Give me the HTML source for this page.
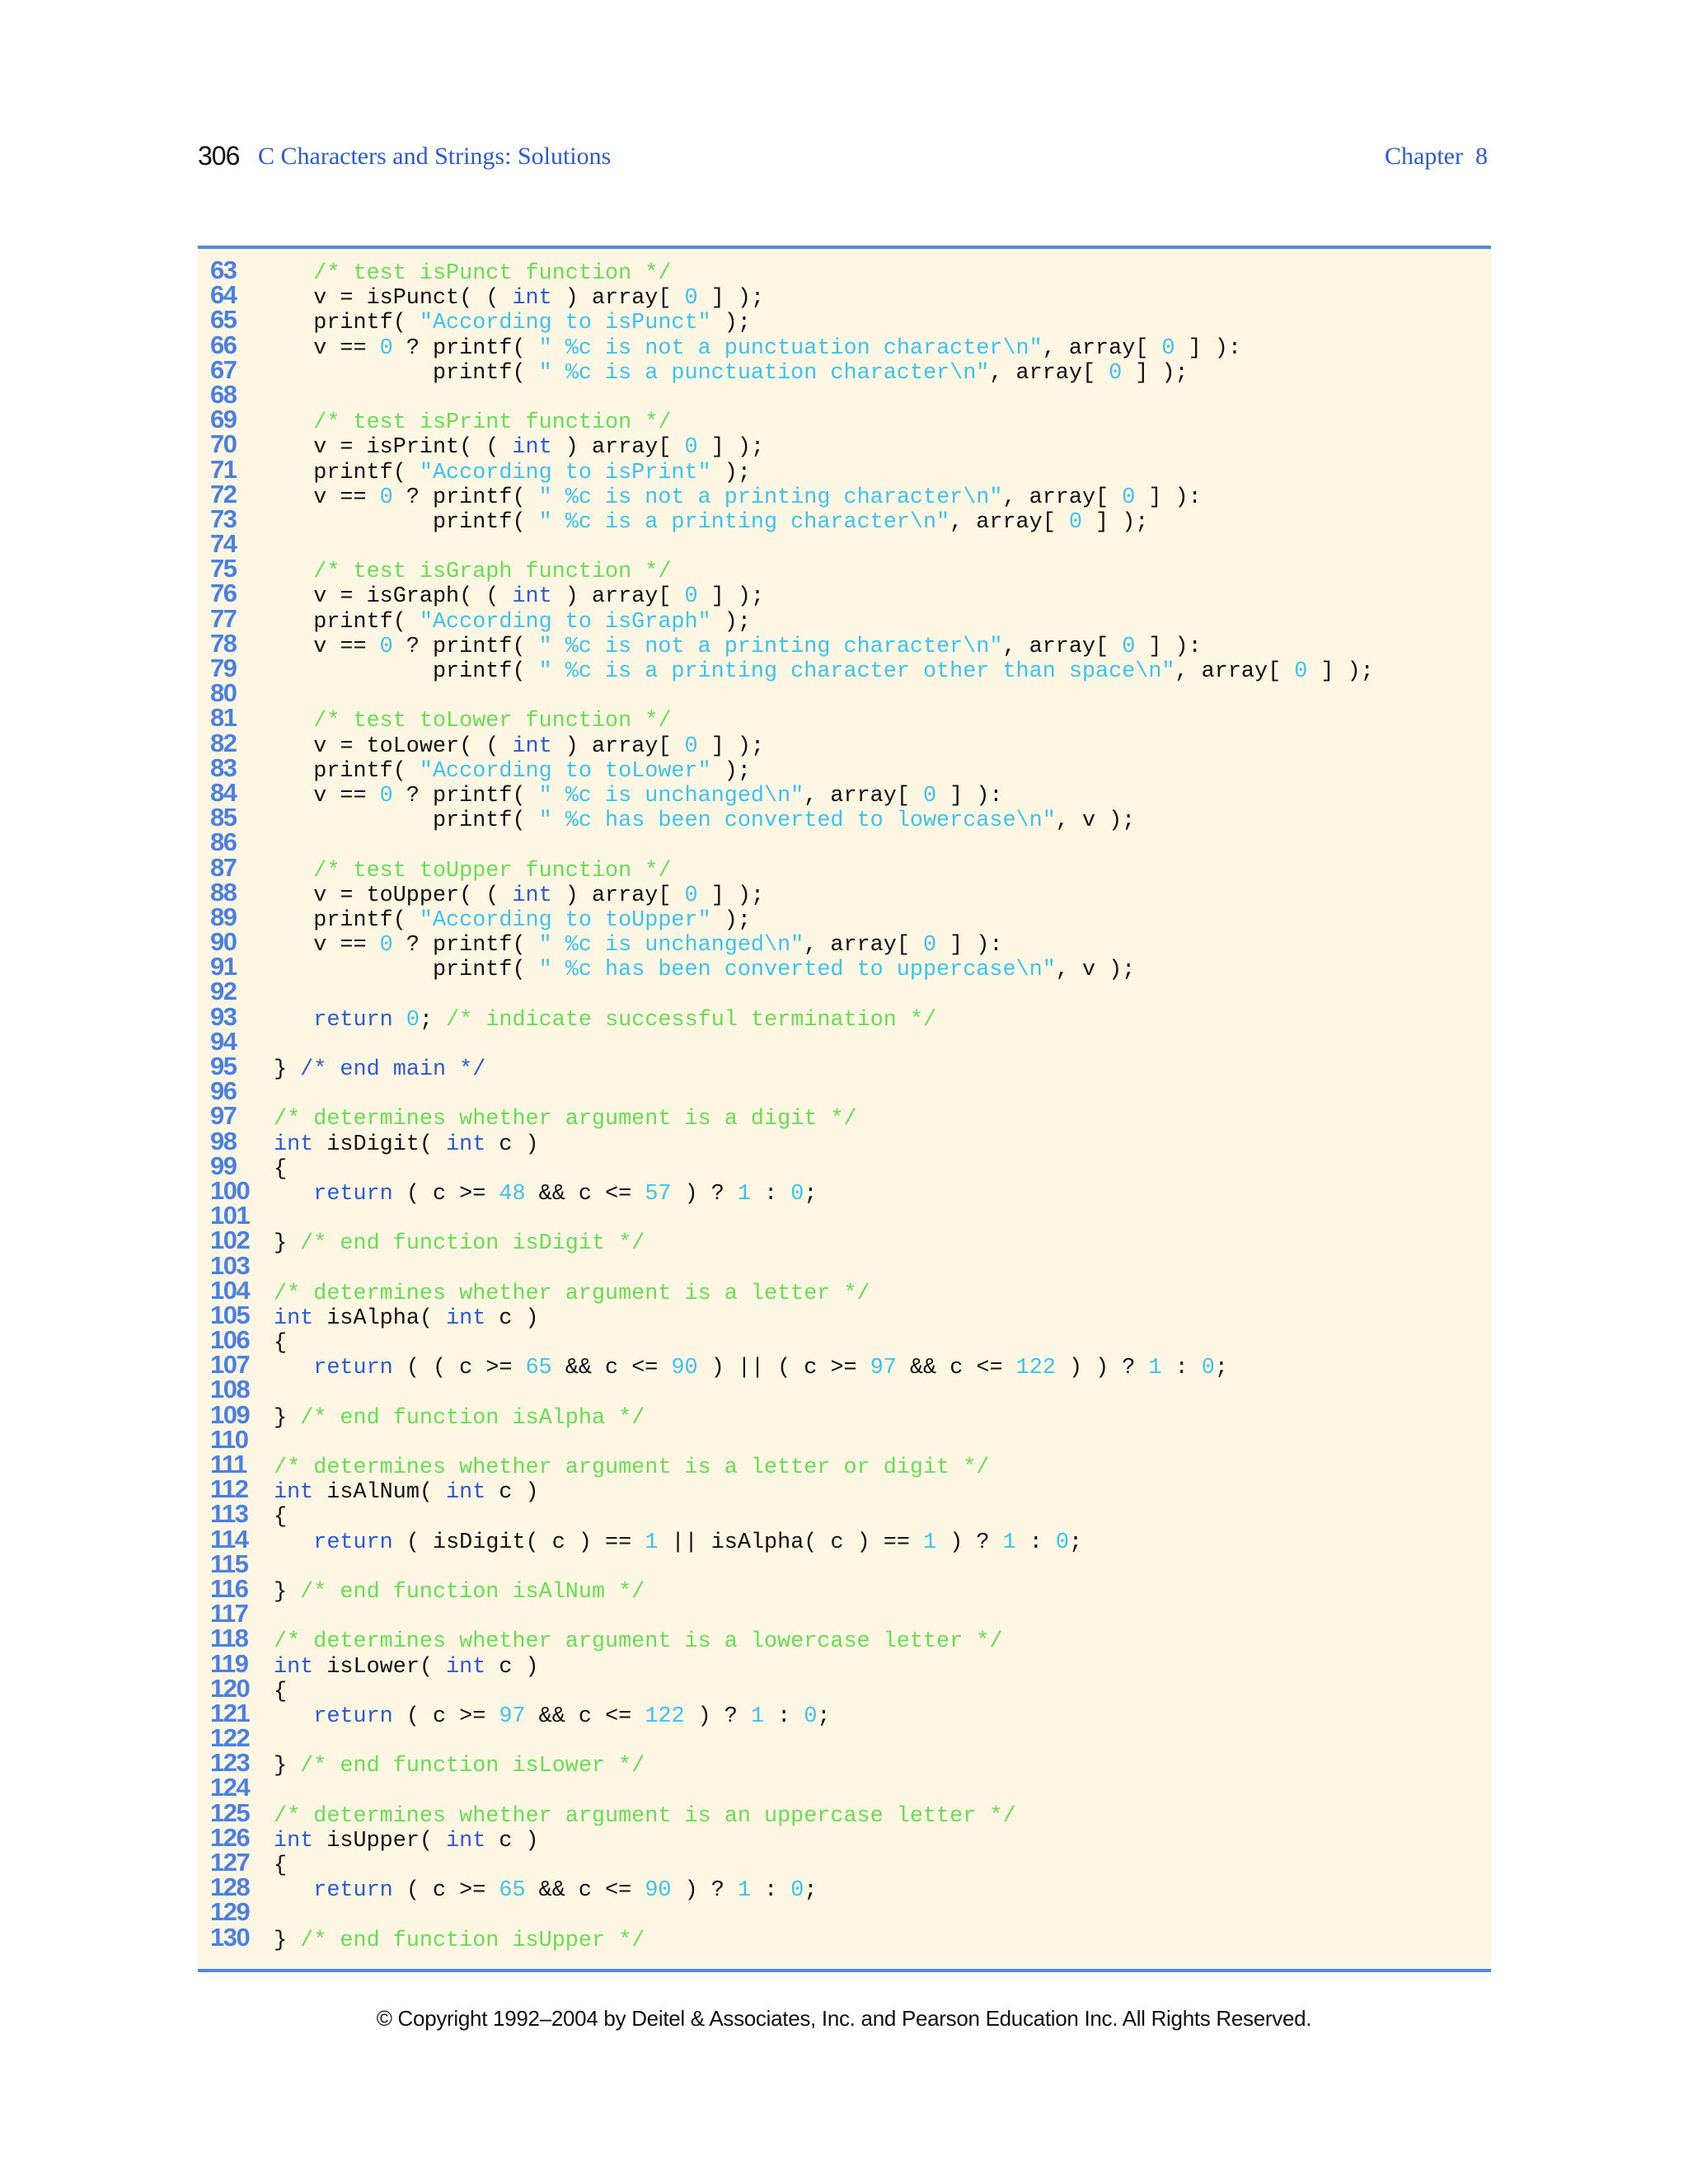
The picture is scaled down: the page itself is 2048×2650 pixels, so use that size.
<!DOCTYPE html>
<html><head><meta charset="utf-8"><style>
body{margin:0;width:2048px;height:2650px;background:#fff;position:relative;overflow:hidden}
.hd{position:absolute;top:173px;font-family:"Liberation Serif",serif;font-size:30px;color:#2a5ad8;white-space:nowrap}
.pn{position:absolute;left:240px;top:171px;font-family:"Liberation Sans",sans-serif;font-size:32px;color:#111;letter-spacing:-1px}
.box{position:absolute;left:240px;top:300px;width:1569px;height:2091px;background:#fdf6e3}
.rule{position:absolute;left:240px;width:1569px;height:4px;background:#4f88e6}
.nums{position:absolute;left:255px;top:313px;font-family:"Liberation Sans",sans-serif;font-weight:bold;font-size:31px;line-height:30.18px;color:#4a80e0;letter-spacing:-1.5px;white-space:pre}
.code{position:absolute;left:332px;top:317px;font-family:"Liberation Mono",monospace;font-size:26.8px;line-height:30.18px;color:#111;white-space:pre}
.c{color:#66dd55}.k{color:#2a5ad8}.n{color:#38c4ee}.b{color:#2a5ad8}
.foot{position:absolute;top:2434px;left:0;width:2048px;text-align:center;font-family:"Liberation Sans",sans-serif;font-size:26px;color:#111;letter-spacing:-0.3px}
</style></head><body>
<div class="pn">306</div>
<div class="hd" style="left:313px">C Characters and Strings: Solutions</div>
<div class="hd" style="left:1680px">Chapter&nbsp; 8</div>
<div class="box"></div>
<div class="rule" style="top:298px"></div>
<div class="rule" style="top:2389px"></div>
<div class="nums">63
64
65
66
67
68
69
70
71
72
73
74
75
76
77
78
79
80
81
82
83
84
85
86
87
88
89
90
91
92
93
94
95
96
97
98
99
100
101
102
103
104
105
106
107
108
109
110
111
112
113
114
115
116
117
118
119
120
121
122
123
124
125
126
127
128
129
130</div>
<div class="code">   <span class="c">/* test isPunct function */</span>
   v = isPunct( ( <span class="k">int</span> ) array[ <span class="n">0</span> ] );
   printf( <span class="n">"According to isPunct"</span> );
   v == <span class="n">0</span> ? printf( <span class="n">" %c is not a punctuation character\n"</span>, array[ <span class="n">0</span> ] ):
            printf( <span class="n">" %c is a punctuation character\n"</span>, array[ <span class="n">0</span> ] );

   <span class="c">/* test isPrint function */</span>
   v = isPrint( ( <span class="k">int</span> ) array[ <span class="n">0</span> ] );
   printf( <span class="n">"According to isPrint"</span> );
   v == <span class="n">0</span> ? printf( <span class="n">" %c is not a printing character\n"</span>, array[ <span class="n">0</span> ] ):
            printf( <span class="n">" %c is a printing character\n"</span>, array[ <span class="n">0</span> ] );

   <span class="c">/* test isGraph function */</span>
   v = isGraph( ( <span class="k">int</span> ) array[ <span class="n">0</span> ] );
   printf( <span class="n">"According to isGraph"</span> );
   v == <span class="n">0</span> ? printf( <span class="n">" %c is not a printing character\n"</span>, array[ <span class="n">0</span> ] ):
            printf( <span class="n">" %c is a printing character other than space\n"</span>, array[ <span class="n">0</span> ] );

   <span class="c">/* test toLower function */</span>
   v = toLower( ( <span class="k">int</span> ) array[ <span class="n">0</span> ] );
   printf( <span class="n">"According to toLower"</span> );
   v == <span class="n">0</span> ? printf( <span class="n">" %c is unchanged\n"</span>, array[ <span class="n">0</span> ] ):
            printf( <span class="n">" %c has been converted to lowercase\n"</span>, v );

   <span class="c">/* test toUpper function */</span>
   v = toUpper( ( <span class="k">int</span> ) array[ <span class="n">0</span> ] );
   printf( <span class="n">"According to toUpper"</span> );
   v == <span class="n">0</span> ? printf( <span class="n">" %c is unchanged\n"</span>, array[ <span class="n">0</span> ] ):
            printf( <span class="n">" %c has been converted to uppercase\n"</span>, v );

   <span class="k">return</span> <span class="n">0</span>; <span class="c">/* indicate successful termination */</span>

} <span class="b">/* end main */</span>

<span class="c">/* determines whether argument is a digit */</span>
<span class="k">int</span> isDigit( <span class="k">int</span> c )
{
   <span class="k">return</span> ( c &gt;= <span class="n">48</span> &amp;&amp; c &lt;= <span class="n">57</span> ) ? <span class="n">1</span> : <span class="n">0</span>;

} <span class="c">/* end function isDigit */</span>

<span class="c">/* determines whether argument is a letter */</span>
<span class="k">int</span> isAlpha( <span class="k">int</span> c )
{
   <span class="k">return</span> ( ( c &gt;= <span class="n">65</span> &amp;&amp; c &lt;= <span class="n">90</span> ) || ( c &gt;= <span class="n">97</span> &amp;&amp; c &lt;= <span class="n">122</span> ) ) ? <span class="n">1</span> : <span class="n">0</span>;

} <span class="c">/* end function isAlpha */</span>

<span class="c">/* determines whether argument is a letter or digit */</span>
<span class="k">int</span> isAlNum( <span class="k">int</span> c )
{
   <span class="k">return</span> ( isDigit( c ) == <span class="n">1</span> || isAlpha( c ) == <span class="n">1</span> ) ? <span class="n">1</span> : <span class="n">0</span>;

} <span class="c">/* end function isAlNum */</span>

<span class="c">/* determines whether argument is a lowercase letter */</span>
<span class="k">int</span> isLower( <span class="k">int</span> c )
{
   <span class="k">return</span> ( c &gt;= <span class="n">97</span> &amp;&amp; c &lt;= <span class="n">122</span> ) ? <span class="n">1</span> : <span class="n">0</span>;

} <span class="c">/* end function isLower */</span>

<span class="c">/* determines whether argument is an uppercase letter */</span>
<span class="k">int</span> isUpper( <span class="k">int</span> c )
{
   <span class="k">return</span> ( c &gt;= <span class="n">65</span> &amp;&amp; c &lt;= <span class="n">90</span> ) ? <span class="n">1</span> : <span class="n">0</span>;

} <span class="c">/* end function isUpper */</span></div>
<div class="foot">© Copyright 1992–2004 by Deitel &amp; Associates, Inc. and Pearson Education Inc. All Rights Reserved.</div>
</body></html>
